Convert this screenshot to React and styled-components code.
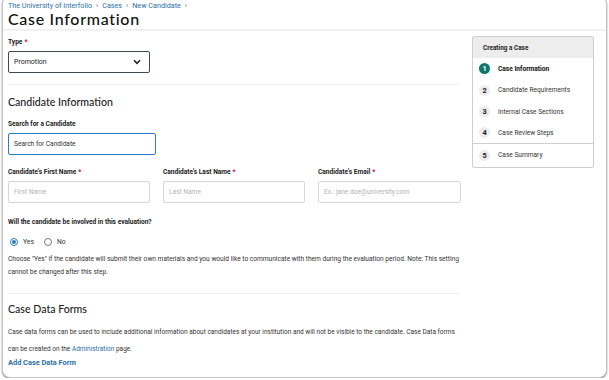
import React, { useState } from 'react';
import styled, { createGlobalStyle } from 'styled-components';

const GlobalStyle = createGlobalStyle`
  html, body {
    margin: 0;
    padding: 0;
    background: #fff;
    font-family: Roboto, "Liberation Sans", Arial, sans-serif;
    color: #222;
    overflow: hidden;
  }
  * { box-sizing: border-box; }
`;

const Frame = styled.div`
  width: 605px;
  height: 382px;
  margin: -4px 0 0 2px;
  border: 1px solid #c4c4c4;
  border-radius: 8px;
  box-shadow: 0 1px 2px rgba(0, 0, 0, 0.45);
  background: #fff;
  overflow: hidden;
`;

const Header = styled.div`
  padding: 4px 5px 2px;
  border-bottom: 2px solid #f1f1f1;
`;

const Crumbs = styled.div`
  display: flex;
  gap: 4px;
  font-size: 7.2px;
  color: #2c6fa6;
  line-height: 10px;
`;

const Sep = styled.span`
  color: #666;
`;

const Title = styled.h1`
  margin: 0;
  font-family: Lato, "Open Sans", sans-serif;
  font-weight: 500;
  font-size: 16px;
  letter-spacing: 0.7px;
  line-height: 16px;
  color: #111;
`;

const Body = styled.div`
  display: flex;
  align-items: flex-start;
`;

const Main = styled.div`
  width: 457px;
  padding: 0 0 0 5px;
`;

const Section = styled.div`
  padding: ${(p) => p.pad || '0'};
  border-bottom: ${(p) => (p.last ? 'none' : '1px solid #efefef')};
`;

const Label = styled.div`
  font-size: 6.6px;
  font-weight: 700;
  color: #222;
  line-height: 9px;
  margin-bottom: ${(p) => p.mb || '4px'};
`;

const Req = styled.span`
  color: #d0021b;
  margin-left: 2px;
`;

const SelectBox = styled.div`
  width: 142px;
  height: 22px;
  border: 1.3px solid #3c4a58;
  border-radius: 2px;
  display: flex;
  align-items: center;
  justify-content: space-between;
  padding: 0 8px 0 5px;
  font-size: 7px;
  color: #222;
`;

const SectionTitle = styled.h2`
  margin: 0;
  font-family: Lato, "Open Sans", sans-serif;
  font-weight: 500;
  font-size: 10.6px;
  line-height: 14px;
  color: #222;
`;

const Input = styled.input`
  display: block;
  width: ${(p) => p.w || '142px'};
  height: 22px;
  border: ${(p) => (p.focus ? '1.5px solid #2d7bc0' : '1px solid #d6d6d6')};
  border-radius: 2px;
  padding: 0 5px;
  font-family: Roboto, "Liberation Sans", Arial, sans-serif;
  font-size: 6.6px;
  color: #222;
  outline: none;
  &::placeholder {
    color: ${(p) => (p.focus ? '#333' : '#b3b3b3')};
  }
`;

const FieldRow = styled.div`
  display: grid;
  grid-template-columns: 142px 142px 143px;
  column-gap: 13px;
`;

const Radios = styled.div`
  display: flex;
  gap: 10px;
  height: 9px;
  margin: 0 0 7px 2px;
`;

const RadioLabel = styled.label`
  display: flex;
  align-items: center;
  gap: 5px;
  font-size: 6.8px;
  color: #333;
`;

const Dot = styled.span`
  width: 8px;
  height: 8px;
  border-radius: 50%;
  border: 1px solid ${(p) => (p.on ? '#2d7bc0' : '#777')};
  display: flex;
  align-items: center;
  justify-content: center;
  &::after {
    content: '';
    width: 4px;
    height: 4px;
    border-radius: 50%;
    background: ${(p) => (p.on ? '#2d7bc0' : 'transparent')};
  }
`;

const Para = styled.p`
  margin: 0;
  font-size: ${(p) => p.fs || '6.5px'};
  line-height: ${(p) => p.lh || '12.5px'};
  color: #333;
`;

const Link = styled.a`
  color: #2c6fa6;
  text-decoration: none;
`;

const AddLink = styled.a`
  display: block;
  color: #2c6fa6;
  text-decoration: none;
  font-weight: 700;
  font-size: 7.4px;
  line-height: 10px;
`;

const Side = styled.div`
  width: 122px;
  margin: 5px 0 0 12px;
  border: 1px solid #cfcfcf;
  border-radius: 2px;
`;

const SideHead = styled.div`
  background: #ededed;
  height: 21px;
  padding: 0 10px;
  display: flex;
  align-items: center;
  font-size: 6.4px;
  font-weight: 700;
  color: #222;
`;

const Step = styled.div`
  display: flex;
  align-items: center;
  gap: 8px;
  height: ${(p) => p.h || '21.5px'};
  padding: 0 6px;
  border-top: ${(p) => (p.line ? '1px solid #cfcfcf' : 'none')};
  font-size: 6.6px;
  font-weight: ${(p) => (p.active ? 700 : 400)};
  color: ${(p) => (p.active ? '#111' : '#333')};
`;

const Num = styled.span`
  width: 11px;
  height: 11px;
  border-radius: 50%;
  background: ${(p) => (p.active ? '#0e776b' : '#ececec')};
  color: ${(p) => (p.active ? '#fff' : '#222')};
  font-size: 7.4px;
  font-weight: 700;
  display: flex;
  align-items: center;
  justify-content: center;
  flex-shrink: 0;
`;

const Chevron = () => (
  <svg width="8" height="6" viewBox="0 0 8 6">
    <path d="M1 1.3 L4 4.3 L7 1.3" fill="none" stroke="#222" strokeWidth="1.6" />
  </svg>
);

const steps = [
  'Case Information',
  'Candidate Requirements',
  'Internal Case Sections',
  'Case Review Steps',
  'Case Summary',
];

const App = () => {
  const [involved, setInvolved] = useState(true);

  return (
    <>
      <GlobalStyle />
      <Frame>
        <Header>
          <Crumbs>
            <span>The University of Interfolio</span>
            <Sep>›</Sep>
            <span>Cases</span>
            <Sep>›</Sep>
            <span>New Candidate</span>
            <Sep>›</Sep>
          </Crumbs>
          <Title>Case Information</Title>
        </Header>
        <Body>
          <Main>
            <Section pad="7px 0 11px">
              <Label>Type<Req>*</Req></Label>
              <SelectBox>
                <span>Promotion</span>
                <Chevron />
              </SelectBox>
            </Section>

            <Section pad="10px 0 15px">
              <SectionTitle>Candidate Information</SectionTitle>
              <div style={{ height: 11 }} />
              <Label mb="4px">Search for a Candidate</Label>
              <Input focus w="148px" placeholder="Search for Candidate" />
              <div style={{ height: 13 }} />
              <FieldRow>
                <Label>Candidate's First Name<Req>*</Req></Label>
                <Label>Candidate's Last Name<Req>*</Req></Label>
                <Label>Candidate's Email<Req>*</Req></Label>
                <Input w="142px" placeholder="First Name" />
                <Input w="142px" placeholder="Last Name" />
                <Input w="143px" placeholder="Ex.: jane.doe@university.com" />
              </FieldRow>
              <div style={{ height: 15 }} />
              <Label mb="10px">Will the candidate be involved in this evaluation?</Label>
              <Radios>
                <RadioLabel onClick={() => setInvolved(true)}>
                  <Dot on={involved ? 1 : 0} />Yes
                </RadioLabel>
                <RadioLabel onClick={() => setInvolved(false)}>
                  <Dot on={involved ? 0 : 1} />No
                </RadioLabel>
              </Radios>
              <Para fs="6.6px">
                Choose "Yes" if the candidate will submit their own materials and you would like to
                communicate with them during the evaluation period. Note: This setting cannot be
                changed after this step.
              </Para>
            </Section>

            <Section pad="8px 0 0" last>
              <SectionTitle>Case Data Forms</SectionTitle>
              <div style={{ height: 8 }} />
              <Para lh="17px">
                Case data forms can be used to include additional information about candidates at
                your institution and will not be visible to the candidate. Case Data forms can be
                created on the <Link href="#">Administration</Link> page.
              </Para>
              <AddLink href="#">Add Case Data Form</AddLink>
            </Section>
          </Main>

          <Side>
            <SideHead>Creating a Case</SideHead>
            {steps.map((s, i) => (
              <Step
                key={s}
                active={i === 0}
                line={i === 4}
                h={i === 3 ? '20px' : i === 4 ? '24px' : '21.5px'}
              >
                <Num active={i === 0}>{i + 1}</Num>
                {s}
              </Step>
            ))}
          </Side>
        </Body>
      </Frame>
    </>
  );
};

export default App;
